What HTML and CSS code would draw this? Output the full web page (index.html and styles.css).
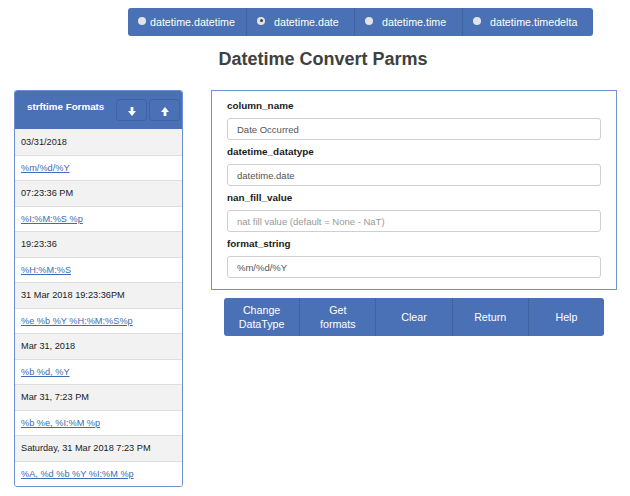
FILE: index.html
```html
<!DOCTYPE html>
<html>
<head>
<meta charset="utf-8">
<link rel="stylesheet" href="styles.css">
</head>
<body>
<div class="topbar">
  <label class="seg seg1"><span class="radio"></span><span>datetime.datetime</span></label>
  <label class="seg seg2"><span class="radio checked"></span><span>datetime.date</span></label>
  <label class="seg seg3"><span class="radio"></span><span>datetime.time</span></label>
  <label class="seg seg4"><span class="radio"></span><span>datetime.timedelta</span></label>
</div>
<h1 class="title">Datetime Convert Parms</h1>
<div class="main">
  <div class="formats">
    <div class="fhead">
      <span class="ftitle">strftime Formats</span>
      <div class="fbtns">
        <button class="abtn"><svg width="8" height="9" viewBox="0 0 8 9"><rect x="2.6" y="0" width="2.8" height="5" fill="#fff"/><polygon points="0,4 8,4 4,9" fill="#fff"/></svg></button>
        <button class="abtn"><svg width="8" height="9" viewBox="0 0 8 9"><rect x="2.6" y="4" width="2.8" height="5" fill="#fff"/><polygon points="0,5 8,5 4,0" fill="#fff"/></svg></button>
      </div>
    </div>
    <div class="row ex">03/31/2018</div>
    <div class="row fmt"><a href="#">%m/%d/%Y</a></div>
    <div class="row ex">07:23:36 PM</div>
    <div class="row fmt"><a href="#">%I:%M:%S %p</a></div>
    <div class="row ex">19:23:36</div>
    <div class="row fmt"><a href="#">%H:%M:%S</a></div>
    <div class="row ex">31 Mar 2018 19:23:36PM</div>
    <div class="row fmt"><a href="#">%e %b %Y %H:%M:%S%p</a></div>
    <div class="row ex">Mar 31, 2018</div>
    <div class="row fmt"><a href="#">%b %d, %Y</a></div>
    <div class="row ex">Mar 31, 7:23 PM</div>
    <div class="row fmt"><a href="#">%b %e, %I:%M %p</a></div>
    <div class="row ex">Saturday, 31 Mar 2018 7:23 PM</div>
    <div class="row fmt"><a href="#">%A, %d %b %Y %I:%M %p</a></div>
  </div>
  <div class="right">
    <div class="form">
      <div class="field">
        <div class="lbl">column_name</div>
        <div class="inp">Date Occurred</div>
      </div>
      <div class="field">
        <div class="lbl">datetime_datatype</div>
        <div class="inp">datetime.date</div>
      </div>
      <div class="field">
        <div class="lbl">nan_fill_value</div>
        <div class="inp ph">nat fill value (default = None - NaT)</div>
      </div>
      <div class="field">
        <div class="lbl">format_string</div>
        <div class="inp">%m/%d/%Y</div>
      </div>
    </div>
    <div class="btnbar">
      <button class="bb">Change<br>DataType</button>
      <button class="bb">Get<br>formats</button>
      <button class="bb">Clear</button>
      <button class="bb">Return</button>
      <button class="bb">Help</button>
    </div>
  </div>
</div>
</body>
</html>
```
FILE: styles.css
```css
* { box-sizing: border-box; }
body {
  margin: 0;
  background: #fff;
  font-family: "Liberation Sans", Arial, sans-serif;
  color: #222;
}
.topbar {
  display: flex;
  margin: 8px 0 0 128px;
  width: 465px;
  height: 28px;
  background: #4a71b5;
  border-radius: 3px;
  overflow: hidden;
}
.seg {
  display: flex;
  align-items: center;
  height: 28px;
  padding-left: 10px;
  color: #fff;
  font-size: 10.7px;
  border-left: 1px solid #3f62a2;
}
.seg1 { width: 118px; gap: 4px; border-left: none; }
.seg2 { width: 108px; gap: 9px; }
.seg3 { width: 108px; gap: 9px; }
.seg4 { width: 131px; gap: 9px; }
.radio {
  width: 8px;
  height: 8px;
  border-radius: 50%;
  background: #e3e3e3;
  position: relative;
  flex: none;
  margin-top: -3px;
}
.radio.checked::after {
  content: "";
  position: absolute;
  left: 2.5px;
  top: 2.5px;
  width: 3px;
  height: 3px;
  border-radius: 50%;
  background: #444;
}
.title {
  margin: 12px 0 0 0;
  padding-left: 16px;
  text-align: center;
  font-size: 18px;
  line-height: 22px;
  font-weight: bold;
  color: #404040;
}
.main {
  display: flex;
  align-items: flex-start;
  margin-top: 20px;
}
.formats {
  margin-left: 14px;
  width: 169px;
  border: 1px solid #6a8fd0;
  border-radius: 3px;
  overflow: hidden;
}
.fhead {
  height: 38px;
  background: #4a71b5;
  display: flex;
  justify-content: space-between;
  align-items: flex-start;
  padding: 8px 2px 0 12px;
}
.ftitle {
  color: #fff;
  font-weight: bold;
  font-size: 9.8px;
  line-height: 12px;
  margin-top: 2px;
}
.fbtns { display: flex; gap: 2px; }
.abtn {
  width: 31px;
  height: 22px;
  padding: 0;
  background: #4a71b5;
  border: 1px solid #3f63a5;
  border-radius: 3px;
  display: flex;
  align-items: center;
  justify-content: center;
}
.abtn svg { display: block; margin-top: 2px; }
.row {
  height: 25.5px;
  display: flex;
  align-items: center;
  padding-left: 6px;
  font-size: 9.2px;
  border-top: 1px solid #dedede;
}
.row.ex { background: #f2f2f2; color: #1a1a1a; }
.row.fmt { background: #fff; }
.fhead + .row { border-top: none; }
.row a { color: #3b6cb5; text-decoration: underline; }
.right { margin-left: 28px; width: 406px; }
.form {
  border: 1px solid #6f93d2;
  padding: 9px 15px 11px 15px;
  display: flex;
  flex-direction: column;
  gap: 6px;
}
.lbl {
  font-size: 9.9px;
  font-weight: bold;
  line-height: 12px;
  margin-bottom: 6px;
  color: #1a1a1a;
}
.inp {
  height: 22px;
  border: 1px solid #cfcfcf;
  border-radius: 3px;
  padding-left: 9px;
  display: flex;
  align-items: center;
  font-size: 9.5px;
  color: #555;
}
.inp.ph { color: #999; }
.btnbar {
  display: flex;
  margin: 8px 0 0 13px;
  width: 380px;
  height: 38px;
  background: #4a71b5;
  border-radius: 3px;
  overflow: hidden;
}
.bb {
  flex: 1;
  background: transparent;
  border: none;
  border-left: 1px solid #3f62a2;
  color: #fff;
  font-family: "Liberation Sans", Arial, sans-serif;
  font-size: 10.7px;
  line-height: 14.5px;
  padding: 0;
}
.bb:first-child { border-left: none; }
```
